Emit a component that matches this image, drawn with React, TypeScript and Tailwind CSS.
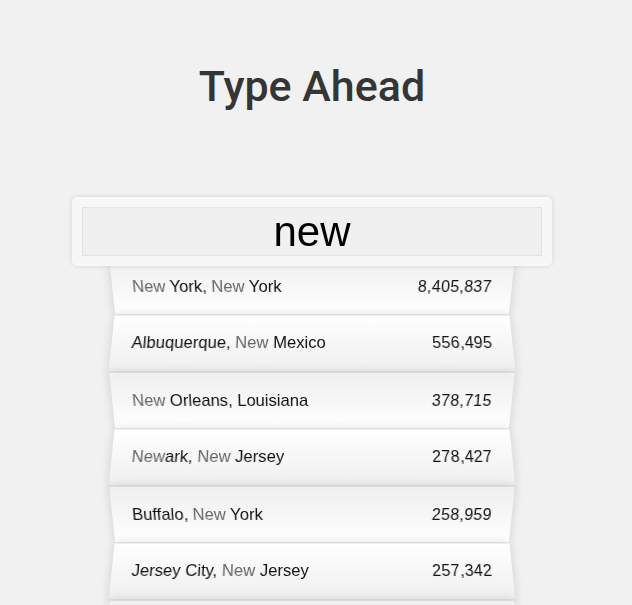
import React from "react";

const rows = [
  { city: "New York", state: "New York", pop: "8,405,837" },
  { city: "Albuquerque", state: "New Mexico", pop: "556,495" },
  { city: "New Orleans", state: "Louisiana", pop: "378,715" },
  { city: "Newark", state: "New Jersey", pop: "278,427" },
  { city: "Buffalo", state: "New York", pop: "258,959" },
  { city: "Jersey City", state: "New Jersey", pop: "257,342" },
];

function Hl({ text }: { text: string }) {
  const parts = text.split(/(new)/i);
  return (
    <>
      {parts.map((p, i) =>
        /^new$/i.test(p) ? (
          <span key={i} className="text-[#666666]">
            {p}
          </span>
        ) : (
          <span key={i}>{p}</span>
        )
      )}
    </>
  );
}

const evenCls =
  "list-none flex justify-between px-[20px] py-[20px] h-[57px] leading-[16px] text-[16.6px] text-[#111111] border-b border-[#d8d8d8] shadow-[0_0_10px_rgba(0,0,0,0.14)] [transform:perspective(100px)_rotateX(3deg)_translateY(2px)_scale(1.001)] bg-[linear-gradient(to_bottom,#ffffff_0%,#efefef_100%)]";
const oddCls =
  "list-none flex justify-between px-[20px] py-[20px] h-[57px] leading-[16px] text-[16.6px] text-[#111111] border-b border-[#d8d8d8] shadow-[0_0_10px_rgba(0,0,0,0.14)] [transform:perspective(100px)_rotateX(-3deg)_translateY(3px)] bg-[linear-gradient(to_top,#ffffff_0%,#efefef_100%)]";

export default function App() {
  return (
    <div className="w-[632px] h-[605px] overflow-hidden bg-[#f1f1f1] font-['Liberation_Sans',Arial,sans-serif]">
      <div className="w-[624px]">
        <h1 className="pt-[62px] text-center text-[43px] leading-[48px] font-medium text-[#353535] font-['Roboto',sans-serif]">
          Type Ahead
        </h1>
        <div className="w-[400px] mx-auto mt-[77px]">
          <input
            className="relative top-[10px] z-[2] -ml-[40px] w-[480px] h-[69px] m-0 text-center outline-none border-[10px] border-[#f7f7f7] rounded-[5px] bg-[#f0f0f0] text-[42px] text-black font-['Liberation_Sans',Arial,sans-serif] shadow-[0_0_5px_rgba(0,0,0,0.12),inset_0_0_2px_rgba(0,0,0,0.19)]"
            defaultValue="new"
            readOnly
          />
          <ul className="relative m-0 p-0">
            {rows.map((r, i) => (
              <li key={i} className={i % 2 === 1 ? evenCls : oddCls}>
                <span>
                  <Hl text={r.city} />, <Hl text={r.state} />
                </span>
                <span className="text-[16px] tracking-[0.3px]">{r.pop}</span>
              </li>
            ))}
            <li className={oddCls} aria-hidden="true"></li>
          </ul>
        </div>
      </div>
    </div>
  );
}
